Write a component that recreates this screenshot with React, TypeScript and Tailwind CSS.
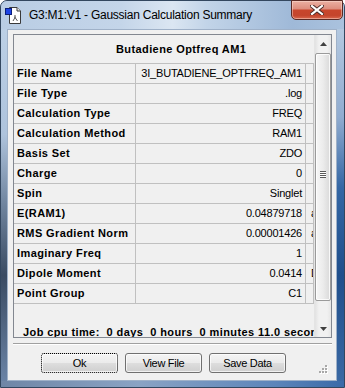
import React from "react";

const rows: [string, string, string][] = [
  ["File Name", "3I_BUTADIENE_OPTFREQ_AM1", ""],
  ["File Type", ".log", ""],
  ["Calculation Type", "FREQ", ""],
  ["Calculation Method", "RAM1", ""],
  ["Basis Set", "ZDO", ""],
  ["Charge", "0", ""],
  ["Spin", "Singlet", ""],
  ["E(RAM1)", "0.04879718", "au"],
  ["RMS Gradient Norm", "0.00001426", "au"],
  ["Imaginary Freq", "1", ""],
  ["Dipole Moment", "0.0414", "Debye"],
  ["Point Group", "C1", ""],
];

function TitleIcon() {
  return (
    <svg width="18" height="18" viewBox="0 0 18 18">
      <path d="M5.5 1.5 H13 L16.5 5 V17.5 H5.5 Z" fill="#ffffff" stroke="#3a3a3a" strokeWidth="1" />
      <path d="M13 1.5 V5 H16.5" fill="#e8e8e8" stroke="#3a3a3a" strokeWidth="1" />
      <rect x="1.5" y="2.5" width="6" height="6" fill="#1d44e6" stroke="#0b1f7a" strokeWidth="1" />
      <path d="M9 15 L11 11.5 L13.5 15 M11 11.5 V9" stroke="#555" strokeWidth="1" fill="none" />
      <circle cx="11" cy="11.5" r="1" fill="#777" />
    </svg>
  );
}

function Btn({ label, focused }: { label: string; focused?: boolean }) {
  return (
    <div
      className={
        "w-[77px] h-[20px] rounded-[3px] flex items-center justify-center text-[11px] tracking-[-0.3px] text-black bg-[linear-gradient(180deg,#f4f4f4_0%,#ebebeb_48%,#dddddd_52%,#cfcfcf_100%)] shadow-[inset_0_0_0_1px_rgba(255,255,255,0.7)] " +
        (focused ? "border border-dotted border-black" : "border border-[#707070]")
      }
    >
      {label}
    </div>
  );
}

export default function App() {
  return (
    <div className="w-[345px] h-[388px] overflow-hidden font-['Liberation_Sans',Arial,sans-serif] text-black">
      <div className="w-full h-full flex flex-col rounded-t-[7px] border border-[#33475f] bg-[#8aa4c4]">
        {/* title bar */}
        <div className="h-[28px] flex items-center rounded-t-[6px] bg-[linear-gradient(90deg,#b9cde4_0%,#c4d5e9_35%,#dbe6f2_50%,#c2d4e8_60%,#9fb9d8_85%,#aac2de_100%)]">
          <div className="ml-[3px] w-[18px] h-[18px]">
            <TitleIcon />
          </div>
          <div className="ml-[7px] text-[12px] tracking-[-0.25px] leading-none">
            G3:M1:V1 - Gaussian Calculation Summary
          </div>
          <div className="ml-auto mr-[1px] self-start -mt-[1px] w-[52px] h-[20px] rounded-b-[5px] border border-[#5a2a24] bg-[linear-gradient(180deg,#ebb0a2_0%,#de8f7f_42%,#c8462c_52%,#c4452c_80%,#d8674d_100%)] shadow-[inset_0_0_0_1px_rgba(255,230,220,0.45)] flex items-center justify-center">
            <svg width="14" height="10" viewBox="0 0 14 10">
              <path d="M2 1 L12 9 M12 1 L2 9" stroke="#4a2a26" strokeWidth="4" strokeLinecap="square" />
              <path d="M2 1 L12 9 M12 1 L2 9" stroke="#ffffff" strokeWidth="2.2" strokeLinecap="square" />
            </svg>
          </div>
        </div>

        {/* middle */}
        <div className="flex flex-1">
          <div className="w-[6px] bg-[linear-gradient(180deg,#bcd0e6_0%,#aec3dc_30%,#6f849e_50%,#3a4b62_70%,#6a83a5_100%)]" />
          <div className="relative w-[330px] h-[352px] border border-[#9fb1c8] bg-[#f0f0f0] flex flex-col">
            {/* panel */}
            <div className="ml-[5px] mt-[4px] w-[319px] h-[304px] border border-[#828790] bg-[#f0f0f0] flex overflow-hidden">
              <div className="w-[300px] h-[302px] overflow-hidden flex flex-col">
                <div className="h-[29px] shrink-0 border-b border-[#c0c0c0] flex items-center pl-[102px] text-[11px] font-bold tracking-[0.4px] whitespace-nowrap">
                  Butadiene Optfreq AM1
                </div>
                <div className="grid grid-cols-[122px_170px_8px] shrink-0">
                  {rows.map(([label, value, unit]) => (
                    <React.Fragment key={label}>
                      <div className="h-[20px] border-r border-b border-[#c0c0c0] flex items-center pl-[3px] text-[11px] font-bold tracking-[0.4px] whitespace-nowrap overflow-hidden">
                        {label}
                      </div>
                      <div className="h-[20px] border-r border-b border-[#c0c0c0] flex items-center justify-end pr-[3px] text-[11px] tracking-[-0.2px] whitespace-nowrap overflow-hidden">
                        {value}
                      </div>
                      <div className="h-[20px] border-r border-b border-[#c0c0c0] flex items-center pl-[5px] text-[11px] whitespace-nowrap overflow-hidden">
                        {unit}
                      </div>
                    </React.Fragment>
                  ))}
                </div>
                <div className="mt-[22px] pl-[9px] text-[11px] leading-[13px] font-bold tracking-[0.4px] whitespace-pre shrink-0">
                  {"Job cpu time:  0 days  0 hours  0 minutes 11.0 seconds."}
                </div>
              </div>
              {/* scrollbar */}
              <div className="w-[17px] h-[302px] flex flex-col bg-[linear-gradient(90deg,#e2e2e2_0%,#f1f1f1_25%,#f1f1f1_75%,#e6e6e6_100%)] border-l border-[#e4e4e4]">
                <div className="h-[17px] flex items-center justify-center">
                  <svg width="7" height="4" viewBox="0 0 7 4">
                    <polygon points="3.5,0 7,4 0,4" fill="#404040" />
                  </svg>
                </div>
                <div className="flex-1 flex flex-col">
                  <div className="mt-[1px] h-[248px] rounded-[2px] border border-[#9a9a9a] bg-[linear-gradient(90deg,#f6f6f6_0%,#ececec_50%,#d9d9d9_100%)] shadow-[inset_0_0_0_1px_rgba(255,255,255,0.8)] flex flex-col items-center justify-center">
                    <div className="flex flex-col -mt-[5px]">
                      <div className="w-[6px] h-[1px] bg-[#5a5a5a]" />
                      <div className="w-[6px] h-[1px] bg-[#ffffff]" />
                      <div className="w-[6px] h-[1px] bg-[#5a5a5a]" />
                      <div className="w-[6px] h-[1px] bg-[#ffffff]" />
                      <div className="w-[6px] h-[1px] bg-[#5a5a5a]" />
                      <div className="w-[6px] h-[1px] bg-[#ffffff]" />
                      <div className="w-[6px] h-[1px] bg-[#5a5a5a]" />
                    </div>
                  </div>
                </div>
                <div className="h-[17px] flex items-center justify-center">
                  <svg width="7" height="4" viewBox="0 0 7 4">
                    <polygon points="0,0 7,0 3.5,4" fill="#404040" />
                  </svg>
                </div>
              </div>
            </div>

            {/* separator */}
            <div className="ml-[5px] mt-[5px] w-[319px] h-[2px] border-t border-b border-t-[#a0a0a0] border-b-[#ffffff]" />

            {/* buttons */}
            <div className="mt-[8px] pl-[33px] flex gap-[7px]">
              <Btn label="Ok" focused />
              <Btn label="View File" />
              <Btn label="Save Data" />
            </div>

            {/* size grip */}
            <svg className="absolute right-[8px] bottom-[6px]" width="9" height="9" viewBox="0 0 9 9">
              {[
                [6, 0],
                [3, 3],
                [6, 3],
                [0, 6],
                [3, 6],
                [6, 6],
              ].map(([x, y]) => (
                <g key={`${x}-${y}`}>
                  <rect x={x + 1} y={y + 1} width="2" height="2" fill="#ffffff" />
                  <rect x={x} y={y} width="2" height="2" fill="#a8a8a8" />
                </g>
              ))}
            </svg>
          </div>
          <div className="w-[7px] bg-[linear-gradient(180deg,#b3c8e0_0%,#90acd0_25%,#3467a5_45%,#1f4f8c_70%,#3a68a3_100%)]" />
        </div>

        {/* bottom frame */}
        <div className="h-[6px] bg-[linear-gradient(90deg,#6f86a6_0%,#8aa3c4_40%,#5c85ba_80%,#3a6aa8_100%)]" />
      </div>
    </div>
  );
}
